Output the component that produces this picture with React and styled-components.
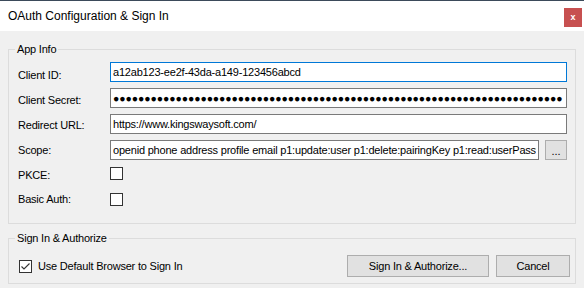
import React from "react";
import styled, { createGlobalStyle } from "styled-components";

const scope =
  "openid phone address profile email p1:update:user p1:delete:pairingKey p1:read:userPassword p1:reset:userPassword";

function App() {
  return (
    <>
      <GlobalStyle />
      <Window>
        <TitleBar>
          <Title>OAuth Configuration &amp; Sign In</Title>
          <CloseButton>x</CloseButton>
        </TitleBar>
        <Body>
          <GroupBox $pr={6}>
            <Legend>App Info</Legend>
            <FormGrid>
              <Label $dy={3}>Client ID:</Label>
              <TextBox $focused readOnly value="a12ab123-ee2f-43da-a149-123456abcd" />

              <Label $dy={2}>Client Secret:</Label>
              <SecretBox>{"\u25CF".repeat(72)}</SecretBox>

              <Label $dy={1}>Redirect URL:</Label>
              <TextBox readOnly value="https://www.kingswaysoft.com/" />

              <Label>Scope:</Label>
              <FieldRow>
                <TextBox readOnly value={scope} />
                <BrowseButton>...</BrowseButton>
              </FieldRow>

              <Label $dy={-1}>PKCE:</Label>
              <CheckBox />

              <Label $dy={-3}>Basic Auth:</Label>
              <CheckBox />
            </FormGrid>
          </GroupBox>

          <GroupBox $pr={5} $pb={6} $mt={8}>
            <Legend>Sign In &amp; Authorize</Legend>
            <ActionRow>
              <CheckOption>
                <CheckBox $checked>
                  <svg width="11" height="11" viewBox="0 0 11 11">
                    <polyline
                      points="1.5,5.5 4,8 9.5,2.5"
                      fill="none"
                      stroke="#333"
                      strokeWidth="1.1"
                    />
                  </svg>
                </CheckBox>
                <OptionText>Use Default Browser to Sign In</OptionText>
              </CheckOption>
              <Button $w={142}>Sign In &amp; Authorize...</Button>
              <Button $w={74}>Cancel</Button>
            </ActionRow>
          </GroupBox>
        </Body>
      </Window>
    </>
  );
}

export default App;

const GlobalStyle = createGlobalStyle`
  * { box-sizing: border-box; }
  body {
    margin: 0;
    background: #f0f0f0;
    font-family: "Liberation Sans", Arial, sans-serif;
    color: #000;
  }
`;
const Window = styled.div`
  width: 584px;
  height: 288px;
  display: flex;
  flex-direction: column;
  border-top: 1px solid #3b4a5a;
  overflow: hidden;
`;
const TitleBar = styled.div`
  height: 30px;
  flex-shrink: 0;
  background: #fff;
  display: flex;
  align-items: center;
  justify-content: space-between;
  padding: 0 2px 0 8px;
`;
const Title = styled.div`
  font-size: 12px;
  color: #000;
`;
const CloseButton = styled.div`
  align-self: flex-start;
  margin-top: 7px;
  width: 18px;
  height: 19px;
  background: #c75050;
  color: #fff;
  font-size: 9px;
  font-weight: bold;
  line-height: 18px;
  text-align: center;
`;
const Body = styled.div`
  flex: 1;
  background: #f0f0f0;
  padding: 12px 8px 0;
`;
const GroupBox = styled.fieldset`
  margin: ${(p) => p.$mt || 0}px 0 0;
  min-width: 0;
  border: 1px solid #dcdcdc;
  padding: 6px ${(p) => p.$pr}px ${(p) => p.$pb ?? 11}px 6px;
`;
const Legend = styled.legend`
  padding: 0 2px;
  font-size: 11px;
  line-height: 13px;
  letter-spacing: -0.2px;
`;
const FormGrid = styled.div`
  display: grid;
  grid-template-columns: 92px 1fr;
  grid-auto-rows: 20px;
  row-gap: 6px;
  padding: 0 2px 0 3px;
`;
const Label = styled.div`
  font-size: 11px;
  line-height: 20px;
  letter-spacing: -0.2px;
  margin-top: ${(p) => p.$dy || 0}px;
  white-space: nowrap;
`;
const TextBox = styled.input`
  display: block;
  width: 100%;
  min-width: 0;
  height: 20px;
  margin: 0;
  padding: 0 2px;
  border: 1px solid ${(p) => (p.$focused ? "#0078d7" : "#7a7a7a")};
  background: #fff;
  color: #000;
  font-family: "Liberation Sans", Arial, sans-serif;
  font-size: 11px;
  letter-spacing: -0.2px;
  outline: none;
`;
const SecretBox = styled.div`
  height: 20px;
  border: 1px solid #7a7a7a;
  background: #fff;
  padding: 0 2px;
  font-size: 10.5px;
  line-height: 18px;
  letter-spacing: -0.1px;
  white-space: nowrap;
  overflow: hidden;
`;
const FieldRow = styled.div`
  display: flex;
  gap: 6px;
  min-width: 0;
`;
const BrowseButton = styled.div`
  flex: 0 0 22px;
  height: 20px;
  border: 1px solid #adadad;
  background: #e1e1e1;
  font-size: 11px;
  line-height: 20px;
  text-align: center;
`;
const CheckBox = styled.div`
  width: 13px;
  height: 13px;
  margin-top: 1px;
  border: 1px solid #333;
  background: #fff;
  display: flex;
  align-items: center;
  justify-content: center;
`;
const ActionRow = styled.div`
  display: flex;
  align-items: center;
  gap: 7px;
  padding: 4px 0 0 4px;
`;
const CheckOption = styled.div`
  flex: 1;
  display: flex;
  align-items: center;
  gap: 6px;
`;
const OptionText = styled.span`
  font-size: 11px;
  letter-spacing: -0.2px;
`;
const Button = styled.div`
  width: ${(p) => p.$w}px;
  height: 22px;
  border: 1px solid #adadad;
  background: #e1e1e1;
  font-size: 11px;
  letter-spacing: -0.2px;
  line-height: 20px;
  text-align: center;
`;
